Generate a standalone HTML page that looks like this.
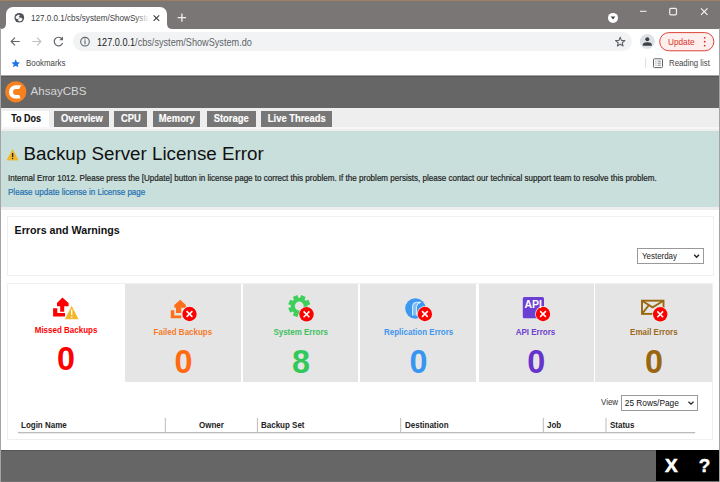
<!DOCTYPE html>
<html><head><meta charset="utf-8">
<style>
*{margin:0;padding:0;box-sizing:border-box}
html,body{width:720px;height:482px;overflow:hidden;background:#fff;font-family:"Liberation Sans",sans-serif}
.a{position:absolute}
.t{position:absolute;white-space:nowrap;line-height:1}
svg{position:absolute;overflow:visible}
</style></head><body>
<!-- browser chrome -->
<div class="a" style="left:0;top:0;width:720px;height:29px;background:#7b7676"></div>
<div class="a" style="left:0;top:0;width:720px;height:1.2px;background:#9b7f5e"></div>
<!-- active tab -->
<div class="a" style="left:6px;top:6.5px;width:161px;height:23px;background:#fff;border-radius:7px 7px 0 0"></div>
<svg style="left:0;top:0" width="720" height="30">
  <path d="M0.5 29 Q6 29 6 23.5 L6 29 Z" fill="#fff"/>
  <path d="M172.5 29 Q167 29 167 23.5 L167 29 Z" fill="#fff"/>
  <!-- globe -->
  <circle cx="19.3" cy="17.75" r="4.85" fill="#4d5156"/>
  <path d="M16.07 16.52 L18.25 15.07 L19.7 15.36 L18.54 16.96 L19.7 17.83 L17.81 18.99 L15.92 18.27 Z" fill="#fff" stroke="#fff" stroke-width="0.5" stroke-linejoin="round"/>
  <path d="M18.54 19.14 L20.43 17.98 L22.17 18.41 L21.88 20.3 L19.85 21.17 L18.4 20.6 Z" fill="#fff" stroke="#fff" stroke-width="0.5" stroke-linejoin="round"/>
  <!-- close x -->
  <path d="M153.6 15.3 L159.2 20.9 M159.2 15.3 L153.6 20.9" stroke="#3c4043" stroke-width="1.1"/>
  <!-- plus -->
  <path d="M181.9 13.6 V21.8 M177.7 17.7 H186.1" stroke="#f1f1f1" stroke-width="1.3"/>
  <!-- dropdown circle -->
  <circle cx="613" cy="17.9" r="5" fill="#fff"/>
  <path d="M610.7 16.6 H615.3 L613 19.6 Z" fill="#3c4043"/>
  <!-- window controls -->
  <path d="M640 11.3 H646.5" stroke="#f0f0f0" stroke-width="1.1"/>
  <rect x="669.7" y="8.3" width="6.8" height="6.6" rx="1.2" fill="none" stroke="#f0f0f0" stroke-width="1.2"/>
  <path d="M701 8.3 L707.5 14.8 M707.5 8.3 L701 14.8" stroke="#f4f4f4" stroke-width="1.2"/>
</svg>
<div class="a" style="left:31px;top:10px;width:120px;height:14px;overflow:hidden"><div class="t" style="left:0;top:3.5px;font-size:9.3px;color:#3c4043;transform:scaleX(0.87);transform-origin:0 0">127.0.0.1/cbs/system/ShowSystem.do</div></div>
<div class="a" style="left:135px;top:10px;width:16px;height:14px;background:linear-gradient(90deg,rgba(255,255,255,0),#fff 90%)"></div>
<!-- toolbar -->
<div class="a" style="left:73px;top:32px;width:559px;height:19.2px;background:#f1f3f4;border-radius:10px"></div>
<svg style="left:0;top:28" width="720" height="48">
  <!-- back -->
  <path d="M11.2 13.5 H19.7 M15 9.7 L11.2 13.5 L15 17.3" stroke="#5f6368" stroke-width="1.15" fill="none"/>
  <path d="M32.3 13.5 H40.9 M37.1 9.7 L40.9 13.5 L37.1 17.3" stroke="#bdc1c6" stroke-width="1.15" fill="none"/>
  <!-- reload -->
  <path d="M62 11 A4.3 4.3 0 1 0 62.6 15" stroke="#5f6368" stroke-width="1.2" fill="none"/>
  <path d="M63 8.5 V12.2 H59.3 Z" fill="#5f6368"/>
  <!-- info -->
  <circle cx="85" cy="13.7" r="4.3" stroke="#5f6368" stroke-width="1.1" fill="none"/>
  <path d="M85 12.3 V16.3 M85 10.6 V11.5" stroke="#5f6368" stroke-width="1.1"/>
  <!-- star -->
  <path d="M620.20 9.20 L621.43 12.40 L624.86 12.59 L622.20 14.75 L623.08 18.06 L620.20 16.20 L617.32 18.06 L618.20 14.75 L615.54 12.59 L618.97 12.40 Z" stroke="#5f6368" stroke-width="1.05" fill="none" stroke-linejoin="round"/>
  <!-- profile -->
  <circle cx="647.3" cy="13.4" r="7.4" fill="#dee1e6"/>
  <circle cx="647.3" cy="11.3" r="2" fill="#3c4043"/>
  <path d="M642.8 17.7 V16.6 Q643.3 14.3 647.3 14.3 Q651.3 14.3 651.8 16.6 V17.7 Z" fill="#3c4043"/>
  <!-- update pill -->
  <rect x="659.7" y="4.6" width="54.2" height="18.2" rx="9.1" fill="#fcefee" stroke="#d93025" stroke-width="0.9"/>
  <circle cx="704.7" cy="9.8" r="0.9" fill="#d93025"/>
  <circle cx="704.7" cy="13.7" r="0.9" fill="#d93025"/>
  <circle cx="704.7" cy="17.6" r="0.9" fill="#d93025"/>
  <!-- bookmarks star -->
  <path d="M15.7 31.3 L17 34.2 L20 34.5 L17.7 36.4 L18.4 39.3 L15.7 37.8 L13 39.3 L13.7 36.4 L11.4 34.5 L14.4 34.2 Z" fill="#1a73e8"/>
  <!-- separator -->
  <path d="M645.7 30 V39.7" stroke="#dadce0" stroke-width="1"/>
  <!-- reading list -->
  <rect x="653.5" y="30.8" width="9" height="8.8" rx="1" fill="none" stroke="#5f6368" stroke-width="1"/>
  <path d="M655.4 33.2 H656.4 M657.6 33.2 H660.8 M655.4 35.2 H656.4 M657.6 35.2 H660.8 M655.4 37.2 H656.4 M657.6 37.2 H660.8" stroke="#5f6368" stroke-width="0.8"/>
</svg>
<div class="t" style="left:96.5px;top:36.8px;font-size:10.5px;color:#202124;transform:scaleX(0.87);transform-origin:0 0">127.0.0.1<span style="color:#5f6368">/cbs/system/ShowSystem.do</span></div>
<div class="t" style="left:668px;top:37.2px;font-size:9.8px;color:#d93025;transform:scaleX(0.84);transform-origin:0 0">Update</div>
<div class="t" style="left:26px;top:59.3px;font-size:9.3px;color:#444;transform:scaleX(0.85);transform-origin:0 0">Bookmarks</div>
<div class="t" style="left:668.8px;top:59px;font-size:9.3px;color:#444;transform:scaleX(0.84);transform-origin:0 0">Reading list</div>

<!-- page -->
<div class="a" style="left:0;top:75px;width:720px;height:32.5px;background:#666"></div>
<div class="a" style="left:0;top:75px;width:720px;height:1px;background:#a8a8a8"></div>
<div class="a" style="left:0;top:76px;width:720px;height:1px;background:#555"></div>
<svg style="left:0;top:75" width="120" height="33">
  <circle cx="15.8" cy="16.8" r="10.6" fill="#f7801f"/>
  <path d="M21.3 10.2 L15.6 10.2 A6.7 6.7 0 0 0 15.6 23.6 L20.6 23.6 L19.2 19.9 L16 19.9 A2.95 2.95 0 0 1 16 14 L19.2 14 Z" fill="#fff"/>
</svg>
<div class="t" style="left:30.5px;top:85px;font-size:11.6px;color:#d6d6d6">AhsayCBS</div>
<div class="a" style="left:0;top:107.5px;width:720px;height:23px;background:#eee"></div>
<div class="a" style="left:0;top:126.6px;width:720px;height:2px;background:#f6f6f6"></div>
<div class="a" style="left:2px;top:111px;width:47.0px;height:15.8px;background:#fff"></div>
<div class="t" style="left:3px;top:113.5px;width:47.0px;text-align:center;font-size:10.3px;font-weight:bold;color:#111;-webkit-text-stroke:0.15px #111"><span style="display:inline-block;transform:scaleX(0.87)">To Dos</span></div>
<div class="a" style="left:53.9px;top:111px;width:55.1px;height:15.8px;background:#777"></div>
<div class="t" style="left:53.9px;top:113.5px;width:55.1px;text-align:center;font-size:10.3px;font-weight:bold;color:#fff;-webkit-text-stroke:0.15px #fff"><span style="display:inline-block;transform:scaleX(0.91)">Overview</span></div>
<div class="a" style="left:114.2px;top:111px;width:32.7px;height:15.8px;background:#777"></div>
<div class="t" style="left:114.2px;top:113.5px;width:32.7px;text-align:center;font-size:10.3px;font-weight:bold;color:#fff;-webkit-text-stroke:0.15px #fff"><span style="display:inline-block;transform:scaleX(0.91)">CPU</span></div>
<div class="a" style="left:152.7px;top:111px;width:47.3px;height:15.8px;background:#777"></div>
<div class="t" style="left:152.7px;top:113.5px;width:47.3px;text-align:center;font-size:10.3px;font-weight:bold;color:#fff;-webkit-text-stroke:0.15px #fff"><span style="display:inline-block;transform:scaleX(0.91)">Memory</span></div>
<div class="a" style="left:206.7px;top:111px;width:49.0px;height:15.8px;background:#777"></div>
<div class="t" style="left:206.7px;top:113.5px;width:49.0px;text-align:center;font-size:10.3px;font-weight:bold;color:#fff;-webkit-text-stroke:0.15px #fff"><span style="display:inline-block;transform:scaleX(0.91)">Storage</span></div>
<div class="a" style="left:261px;top:111px;width:71.3px;height:15.8px;background:#777"></div>
<div class="t" style="left:261px;top:113.5px;width:71.3px;text-align:center;font-size:10.3px;font-weight:bold;color:#fff;-webkit-text-stroke:0.15px #fff"><span style="display:inline-block;transform:scaleX(0.91)">Live Threads</span></div>

<!-- teal -->
<div class="a" style="left:0;top:130.5px;width:720px;height:76.8px;background:#c9dfdc"></div>
<svg style="left:0;top:140" width="30" height="30">
  <path d="M12.6 9.75 L18.1 20 H7.1 Z" fill="#f2b62a" stroke="#f2b62a" stroke-width="0.8" stroke-linejoin="round"/>
  <path d="M12.6 13 V17" stroke="#222" stroke-width="1.3"/>
  <circle cx="12.6" cy="18.5" r="0.7" fill="#222"/>
</svg>
<div class="t" style="left:23.6px;top:144.8px;font-size:18.8px;color:#111">Backup Server License Error</div>
<div class="t" style="left:7.5px;top:173.7px;font-size:8.6px;color:#222;-webkit-text-stroke:0.2px #222;transform:scaleX(0.936);transform-origin:0 0">Internal Error 1012. Please press the [Update] button in license page to correct this problem. If the problem persists, please contact our technical support team to resolve this problem.</div>
<div class="t" style="left:7.5px;top:188px;font-size:8.6px;color:#2470b0;-webkit-text-stroke:0.2px #2470b0;transform:scaleX(0.936);transform-origin:0 0">Please update license in License page</div>
<div class="a" style="left:0;top:206.9px;width:720px;height:3px;background:#eee"></div>

<!-- errors box -->
<div class="a" style="left:7px;top:216.2px;width:707px;height:60.3px;border:1px solid #efefef"></div>
<div class="t" style="left:14.6px;top:225px;font-size:10.68px;font-weight:bold;color:#111">Errors and Warnings</div>
<div class="a" style="left:637px;top:248px;width:66.7px;height:15.7px;border:1px solid #999;background:#fff"></div>
<div class="t" style="left:641.9px;top:251.8px;font-size:8.6px;color:#222;transform:scaleX(0.922);transform-origin:0 0">Yesterday</div>
<svg style="left:0;top:0" width="720" height="300">
  <path d="M694.2 254.8 L696.6 257.2 L699 254.8" stroke="#222" stroke-width="1.4" fill="none"/>
</svg>

<!-- cards container -->
<div class="a" style="left:7px;top:283.3px;width:706.3px;height:157px;border:1px solid #efefef"></div>
<div class="a" style="left:125px;top:284.3px;width:115.8px;height:98px;background:#e5e5e5"></div>
<div class="a" style="left:242.9px;top:284.3px;width:115.4px;height:98px;background:#e5e5e5"></div>
<div class="a" style="left:360.2px;top:284.3px;width:116.3px;height:98px;background:#e5e5e5"></div>
<div class="a" style="left:478.5px;top:284.3px;width:115px;height:98px;background:#e5e5e5"></div>
<div class="a" style="left:595.4px;top:284.3px;width:116.9px;height:98px;background:#e5e5e5"></div>

<svg style="left:0;top:0" width="720" height="400">
  <!-- missed -->
  <path d="M62.4 297.6 L68.6 303 V306.3 H64.2 V311.8 H60.2 V306.3 H57 V303 Z" fill="#f00"/>
  <path d="M53.1 308.2 H57.3 V312.9 H65 V316.5 H53.1 Z" fill="#f00"/>
  <path d="M71.7 305.2 L79 319.4 H64.4 Z" fill="#f2b62a" stroke="#fff" stroke-width="0.6" stroke-linejoin="round"/>
  <path d="M71.7 309.5 V315" stroke="#fff" stroke-width="1.3"/>
  <circle cx="71.7" cy="317" r="0.75" fill="#fff"/>
  <!-- failed -->
  <path d="M180.2 299.8 L185.9 305 V307.8 H181.2 V313 H176 V307.8 H174.3 V305 Z" fill="#ff6f1a"/>
  <path d="M170.8 310.3 H174.3 V315.4 H181.2 V318.3 H170.8 Z" fill="#ff6f1a"/>
  <!-- gear -->
  <g transform="translate(299.25 306.1)" fill="#3ccf5a">
    <path fill-rule="evenodd" d="M0.88 -8.35 L1.94 -11.03 L6.42 -9.17 L5.29 -6.53 L6.53 -5.29 L9.17 -6.42 L11.03 -1.94 L8.35 -0.88 L8.35 0.88 L11.03 1.94 L9.17 6.42 L6.53 5.29 L5.29 6.53 L6.42 9.17 L1.94 11.03 L0.88 8.35 L-0.88 8.35 L-1.94 11.03 L-6.42 9.17 L-5.29 6.53 L-6.53 5.29 L-9.17 6.42 L-11.03 1.94 L-8.35 0.88 L-8.35 -0.88 L-11.03 -1.94 L-9.17 -6.42 L-6.53 -5.29 L-5.29 -6.53 L-6.42 -9.17 L-1.94 -11.03 L-0.88 -8.35 Z M4.5 0 A4.5 4.5 0 1 0 -4.5 0 A4.5 4.5 0 1 0 4.5 0 Z"/>
  </g>
  <!-- blue circle -->
  <circle cx="415.4" cy="308.5" r="10.2" fill="#3d98f0"/>
  <path d="M412.6 315.5 V305.8 Q412.8 302.4 416.5 302.3 L420.8 302.3 Q417.2 303.3 416.4 306.5 V315.5" fill="rgba(255,255,255,0.35)" stroke="#fff" stroke-width="0.85"/>
  <!-- api -->
  <rect x="522.8" y="296.9" width="21.2" height="21.4" rx="1.6" fill="#6a3fd3"/>
  <!-- email -->
  <rect x="642" y="300.7" width="21.5" height="13.2" fill="none" stroke="#99680f" stroke-width="1.9"/>
  <path d="M642 300.7 L652.6 307.4 L663.5 300.7 M642 313.9 L649 305" fill="none" stroke="#99680f" stroke-width="1.9"/>
  <!-- x circles -->
  <g id="xc">
  <circle cx="189.5" cy="314" r="7.9" fill="#e9f0ee"/>
  <circle cx="189.5" cy="314" r="7.2" fill="#f00"/>
  <path d="M186.6 311.1 L192.4 316.9 M192.4 311.1 L186.6 316.9" stroke="#fff" stroke-width="1.5"/>
  </g>
  <g transform="translate(117 0.3)">
  <circle cx="189.5" cy="314" r="7.9" fill="#e9f0ee"/>
  <circle cx="189.5" cy="314" r="7.2" fill="#f00"/>
  <path d="M186.6 311.1 L192.4 316.9 M192.4 311.1 L186.6 316.9" stroke="#fff" stroke-width="1.5"/>
  </g>
  <g transform="translate(235.4 0)">
  <circle cx="189.5" cy="314" r="7.9" fill="#e9f0ee"/>
  <circle cx="189.5" cy="314" r="7.2" fill="#f00"/>
  <path d="M186.6 311.1 L192.4 316.9 M192.4 311.1 L186.6 316.9" stroke="#fff" stroke-width="1.5"/>
  </g>
  <g transform="translate(353.5 0)">
  <circle cx="189.5" cy="314" r="7.9" fill="#e9f0ee"/>
  <circle cx="189.5" cy="314" r="7.2" fill="#f00"/>
  <path d="M186.6 311.1 L192.4 316.9 M192.4 311.1 L186.6 316.9" stroke="#fff" stroke-width="1.5"/>
  </g>
  <g transform="translate(470.7 0.3)">
  <circle cx="189.5" cy="314" r="7.9" fill="#e9f0ee"/>
  <circle cx="189.5" cy="314" r="7.2" fill="#f00"/>
  <path d="M186.6 311.1 L192.4 316.9 M192.4 311.1 L186.6 316.9" stroke="#fff" stroke-width="1.5"/>
  </g>
</svg>
<div class="t" style="left:524.5px;top:299.3px;font-size:10.5px;font-weight:bold;color:#fff">API</div>

<div class="t" style="left:6.20px;top:326px;width:120px;text-align:center;font-size:8.7px;font-weight:bold;color:#f00"><span style="display:inline-block;transform:scaleX(0.92)">Missed Backups</span></div>
<div class="t" style="left:6.00px;top:343.2px;width:120px;text-align:center;font-size:32.3px;font-weight:bold;color:#f00">0</div>
<div class="t" style="left:123.10px;top:328px;width:120px;text-align:center;font-size:8.7px;font-weight:bold;color:#f57a28"><span style="display:inline-block;transform:scaleX(0.92)">Failed Backups</span></div>
<div class="t" style="left:123.50px;top:345.8px;width:120px;text-align:center;font-size:32.3px;font-weight:bold;color:#ff6a13">0</div>
<div class="t" style="left:240.95px;top:328px;width:120px;text-align:center;font-size:8.7px;font-weight:bold;color:#3cc15d"><span style="display:inline-block;transform:scaleX(0.92)">System Errors</span></div>
<div class="t" style="left:240.90px;top:345.8px;width:120px;text-align:center;font-size:32.3px;font-weight:bold;color:#33c95a">8</div>
<div class="t" style="left:358.40px;top:328px;width:120px;text-align:center;font-size:8.7px;font-weight:bold;color:#3f95ee"><span style="display:inline-block;transform:scaleX(0.92)">Replication Errors</span></div>
<div class="t" style="left:358.40px;top:345.8px;width:120px;text-align:center;font-size:32.3px;font-weight:bold;color:#3796f2">0</div>
<div class="t" style="left:475.75px;top:328px;width:120px;text-align:center;font-size:8.7px;font-weight:bold;color:#6c3fd0"><span style="display:inline-block;transform:scaleX(0.92)">API Errors</span></div>
<div class="t" style="left:476.30px;top:345.8px;width:120px;text-align:center;font-size:32.3px;font-weight:bold;color:#6633cc">0</div>
<div class="t" style="left:593.50px;top:328px;width:120px;text-align:center;font-size:8.7px;font-weight:bold;color:#9c6a1a"><span style="display:inline-block;transform:scaleX(0.92)">Email Errors</span></div>
<div class="t" style="left:593.90px;top:345.8px;width:120px;text-align:center;font-size:32.3px;font-weight:bold;color:#996611">0</div>

<!-- table -->
<div class="t" style="left:600.7px;top:397.6px;font-size:8.3px;color:#333;transform:scaleX(0.96);transform-origin:0 0">View</div>
<div class="a" style="left:620.7px;top:395.2px;width:77.3px;height:15.4px;border:1px solid #999;background:#fff"></div>
<div class="t" style="left:624.8px;top:399.3px;font-size:8.3px;color:#111">25 Rows/Page</div>
<svg style="left:0;top:0" width="720" height="440">
  <path d="M688.5 401.8 L691 404.2 L693.5 401.8" stroke="#222" stroke-width="1.3" fill="none"/>
  <path d="M18 432.7 H695.2" stroke="#a6a6a6" stroke-width="1.15"/>
  <path d="M165.3 417.9 V432.3 M257.4 417.9 V432.3 M400.7 417.9 V432.3 M543.3 417.9 V432.3 M606 417.9 V432.3" stroke="#bbb" stroke-width="1"/>
</svg>
<div class="t" style="left:21.3px;top:420.9px;font-size:8.7px;font-weight:bold;color:#222;transform:scaleX(0.92);transform-origin:0 0">Login Name</div>
<div class="t" style="left:198.7px;top:420.9px;font-size:8.7px;font-weight:bold;color:#222;transform:scaleX(0.92);transform-origin:0 0">Owner</div>
<div class="t" style="left:261.3px;top:420.9px;font-size:8.7px;font-weight:bold;color:#222;transform:scaleX(0.92);transform-origin:0 0">Backup Set</div>
<div class="t" style="left:404.6px;top:420.9px;font-size:8.7px;font-weight:bold;color:#222;transform:scaleX(0.92);transform-origin:0 0">Destination</div>
<div class="t" style="left:547.3px;top:420.9px;font-size:8.7px;font-weight:bold;color:#222;transform:scaleX(0.92);transform-origin:0 0">Job</div>
<div class="t" style="left:610.4px;top:420.9px;font-size:8.7px;font-weight:bold;color:#222;transform:scaleX(0.92);transform-origin:0 0">Status</div>

<!-- footer -->
<div class="a" style="left:0;top:449.8px;width:720px;height:32.2px;background:#666"></div>
<div class="a" style="left:0;top:449.8px;width:720px;height:1px;background:#555"></div>
<div class="a" style="left:0;top:480.5px;width:720px;height:1.5px;background:#727272"></div>
<div class="a" style="left:655.9px;top:449.8px;width:64px;height:30.8px;background:#000"></div>
<div class="t" style="left:664.9px;top:456px;font-size:19px;font-weight:bold;color:#fff;-webkit-text-stroke:0.6px #fff">X</div>
<div class="t" style="left:698.8px;top:456px;font-size:19px;font-weight:bold;color:#fff;-webkit-text-stroke:0.4px #fff">?</div>

<!-- window borders -->
<div class="a" style="left:0;top:28px;width:1px;height:454px;background:#a4a4a4"></div>
<div class="a" style="left:719px;top:28px;width:1px;height:454px;background:#a4a4a4"></div>
</body></html>
